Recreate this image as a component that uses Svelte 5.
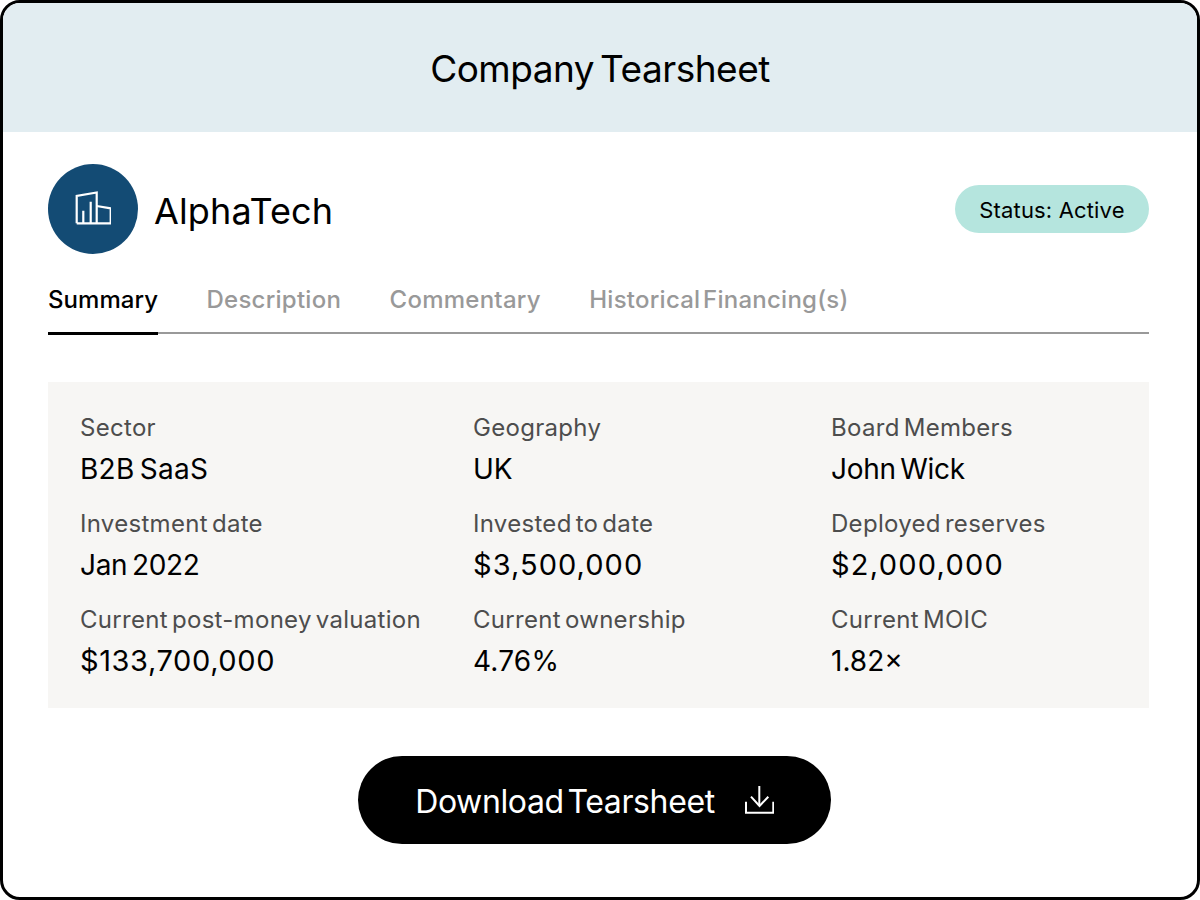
<script>
  const tabs = ['Summary', 'Description', 'Commentary', 'Historical Financing(s)'];
  const fields = [
    ['Sector', 'B2B SaaS', 0.3], ['Geography', 'UK', 0], ['Board Members', 'John Wick', -0.3],
    ['Investment date', 'Jan 2022', -0.3], ['Invested to date', '$3,500,000', 1.05], ['Deployed reserves', '$2,000,000', 1.25],
    ['Current post-money valuation', '$133,700,000', 0.6], ['Current ownership', '4.76%', 0.2], ['Current MOIC', '1.82×', 0]
  ];
</script>

<div class="card">
  <header class="top">Company Tearsheet</header>
  <div class="body">
    <div class="company">
      <div class="logo">
        <svg width="36" height="36" viewBox="0 0 36 36" fill="none" stroke="#fff" stroke-width="2.2">
          <path d="M1.7 32.3V5L21.7 1.5V32.3"/>
          <path d="M21.7 15L35.7 17.3V32.3H1.7"/>
          <path d="M8.3 32V19.7M15.7 32V10.7"/>
        </svg>
      </div>
      <div class="name">AlphaTech</div>
      <div class="status"><span>Status: Active</span></div>
    </div>
    <nav class="tabs">
      {#each tabs as t, i}
        <div class="tab" class:active={i === 0}>{t}</div>
      {/each}
    </nav>
    <section class="panel">
      {#each fields as f}
        <div class="field">
          <div class="label">{f[0]}</div>
          <div class="value" class:money={f[1].startsWith('$')} style:letter-spacing="{f[2]}px">{f[1]}</div>
        </div>
      {/each}
    </section>
    <div class="actions">
      <button class="download">
        <span class="dl-text">Download Tearsheet</span>
        <svg width="30" height="32" viewBox="0 0 30 32" fill="none" stroke="#fff" stroke-width="2">
          <path d="M2 17.7V28.7H29.3V17.7"/>
          <path d="M15.3 2V22"/>
          <path d="M7 12.7L15.5 22L24.3 12.7"/>
        </svg>
      </button>
    </div>
  </div>
</div>

<style>
  :global(body) { margin: 0; background: #fff; }
  .card {
    box-sizing: border-box;
    width: 1200px;
    height: 900px;
    border: 3px solid #000;
    border-radius: 20px;
    overflow: hidden;
    background: #fff;
    font-family: Inter, "Liberation Sans", sans-serif;
    color: #000;
  }
  .top {
    height: 129px;
    background: #e2edf1;
    display: flex;
    align-items: center;
    justify-content: center;
    font-size: 37px;
    letter-spacing: -0.5px;
    word-spacing: -4px;
    padding-top: 1px;
    box-sizing: border-box;
  }
  .body { padding: 32px 48px 0 45px; }
  .company { display: flex; align-items: center; height: 90px; }
  .logo {
    width: 90px;
    height: 90px;
    border-radius: 50%;
    background: #134b74;
    display: flex;
    align-items: center;
    justify-content: center;
    margin-right: 16px;
    flex: none;
  }
  .name { font-size: 36px; letter-spacing: 0.15px; flex: 1; padding-top: 3px; }
  .status {
    width: 194px;
    height: 48px;
    border-radius: 24px;
    background: #b5e5de;
    display: flex;
    align-items: center;
    justify-content: center;
    font-size: 22px;
    letter-spacing: 0.15px;
    padding-top: 1px;
    box-sizing: border-box;
  }
  .tabs {
    display: flex;
    gap: 48.5px;
    margin-top: 24px;
    height: 54px;
    border-bottom: 2px solid #999;
  }
  .tab {
    font-size: 24px;
    font-weight: 500;
    color: #999;
    padding-top: 7px;
    height: 47px;
    letter-spacing: 0.25px;
    word-spacing: -4px;
  }
  .tab.active {
    color: #000;
    letter-spacing: 0.05px;
    border-bottom: 3px solid #000;
    margin-bottom: -2px;
  }
  .panel {
    margin-top: 48px;
    background: #f7f6f4;
    height: 326px;
    box-sizing: border-box;
    padding: 24px 32px;
    display: grid;
    grid-template-columns: 393px 358px 1fr;
    grid-auto-rows: 96px;
  }
  .label { font-size: 24px; line-height: 44px; height: 44px; color: #4d4d4d; letter-spacing: 0.3px; word-spacing: -3px; }
  .value { font-size: 28px; line-height: 38px; height: 38px; word-spacing: -3px; }
  .value.money { font-size: 29px; }
  .actions { display: flex; justify-content: center; margin-top: 48px; padding-right: 8px; }
  .download {
    width: 473px;
    height: 88px;
    border: 0;
    border-radius: 44px;
    background: #000;
    color: #fff;
    font: inherit;
    font-size: 32px;
    letter-spacing: -0.37px;
    word-spacing: -5px;
    display: flex;
    align-items: center;
    justify-content: center;
    gap: 29px;
    padding: 0;
  }
  .dl-text { padding-top: 2px; }
</style>
